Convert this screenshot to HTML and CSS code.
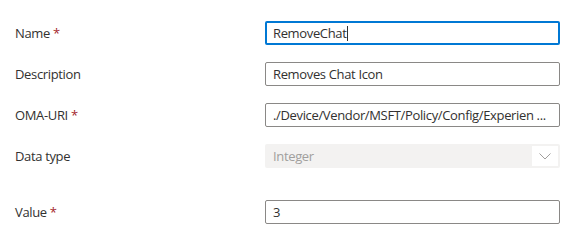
FILE: index.html
```html
<!DOCTYPE html>
<html lang="en">
<head>
    <meta charset="UTF-8">
    <title>OMA-URI Setting</title>
    <link rel="stylesheet" href="styles.css">
</head>
<body>

<div class="setting-form">
    <div class="row">
        <label class="label">Name <span class="req">*</span></label>
        <div class="field focused">RemoveChat<span class="caret"></span></div>
    </div>
    <div class="row">
        <label class="label">Description</label>
        <div class="field">Removes Chat Icon</div>
    </div>
    <div class="row">
        <label class="label">OMA-URI <span class="req">*</span></label>
        <div class="field">./Device/Vendor/MSFT/Policy/Config/Experien ...</div>
    </div>
    <div class="row">
        <label class="label">Data type</label>
        <div class="dropdown">
            <span class="dropdown-text">Integer</span>
            <span class="chevron">
                <svg width="12" height="7" viewBox="0 0 12 7"><path d="M0.5 0.5 L6 6 L11.5 0.5" fill="none" stroke="#a19f9d" stroke-width="1"/></svg>
            </span>
        </div>
    </div>
    <div class="row spaced">
        <label class="label">Value <span class="req">*</span></label>
        <div class="field">3</div>
    </div>
</div>

</body>
</html>
```

FILE: styles.css
```css
body {
    margin: 0;
    padding: 21px 17px 0 15px;
    font-family: "Open Sans", "Noto Sans", Arial, sans-serif;
    font-size: 13px;
    letter-spacing: -0.35px;
    color: #323130;
    background: #fff;
}
.setting-form {
    display: flex;
    flex-direction: column;
    gap: 17px;
}
.row {
    display: grid;
    grid-template-columns: 250px 1fr;
    align-items: center;
}
.row.spaced {
    margin-top: 15px;
}
.label {
    line-height: 20px;
}
.req {
    color: #a4262c;
}
.field {
    height: 24px;
    box-sizing: border-box;
    border: 1px solid #8a8886;
    border-radius: 2px;
    padding: 0 7px;
    line-height: 22px;
    white-space: nowrap;
    overflow: hidden;
}
.field.focused {
    border: 2px solid #0078d4;
    padding: 0 6px;
    line-height: 20px;
}
.caret {
    display: inline-block;
    width: 1px;
    height: 15px;
    background: #323130;
    vertical-align: -3px;
}
.dropdown {
    height: 24px;
    background: #f3f2f1;
    border-radius: 2px;
    display: flex;
    align-items: center;
    justify-content: space-between;
    padding: 0 2px 0 8px;
}
.dropdown-text {
    color: #a19f9d;
}
.chevron {
    width: 26px;
    height: 20px;
    background: #fff;
    display: flex;
    align-items: center;
    justify-content: center;
}
```
